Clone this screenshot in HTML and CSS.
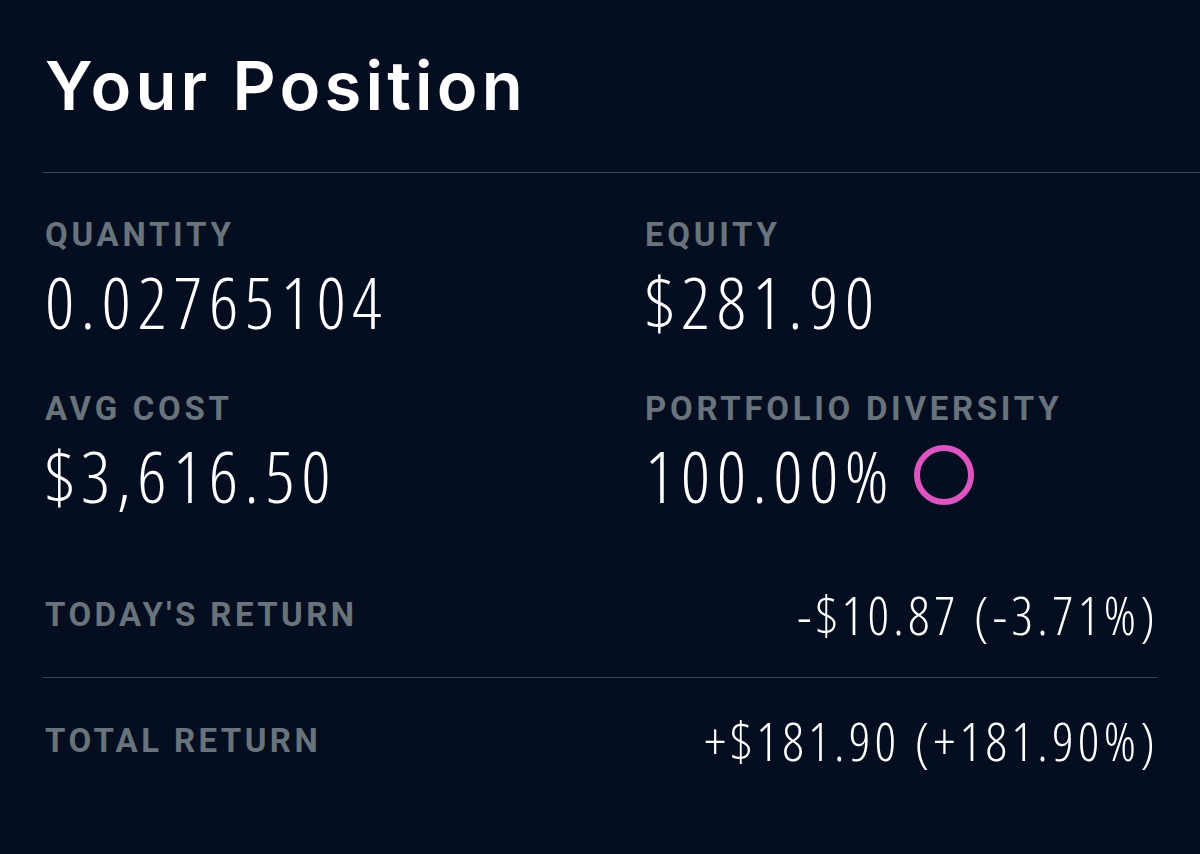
FILE: index.html
```html
<!DOCTYPE html>
<html lang="en">
<head>
<meta charset="utf-8">
<title>Your Position</title>
<link rel="stylesheet" href="styles.css">
</head>
<body>
<main class="position">
  <h1 class="title">Your Position</h1>
  <div class="rule rule-full"></div>
  <section class="stats">
    <div class="stat">
      <div class="label">QUANTITY</div>
      <div class="value">0.02765104</div>
    </div>
    <div class="stat">
      <div class="label">EQUITY</div>
      <div class="value">$281.90</div>
    </div>
    <div class="stat">
      <div class="label">AVG COST</div>
      <div class="value">$3,616.50</div>
    </div>
    <div class="stat">
      <div class="label">PORTFOLIO DIVERSITY</div>
      <div class="value value-ring">100.00%
        <svg class="ring" width="60" height="60" viewBox="0 0 60 60" aria-hidden="true"><circle cx="30" cy="30" r="27" fill="none" stroke="#de55c1" stroke-width="6"/></svg>
      </div>
    </div>
  </section>
  <div class="row row-today">
    <div class="label label-row">TODAY'S RETURN</div>
    <div class="row-value">-$10.87 (-3.71%)</div>
  </div>
  <div class="rule rule-inner"></div>
  <div class="row row-total">
    <div class="label label-row">TOTAL RETURN</div>
    <div class="row-value">+$181.90 (+181.90%)</div>
  </div>
</main>
</body>
</html>
```
FILE: styles.css
```css
html, body {
  margin: 0;
  padding: 0;
  background: #050d20;
  height: 100%;
}
body {
  color: #ffffff;
  font-family: "Open Sans", "Liberation Sans", sans-serif;
  overflow: hidden;
}
.position {
  padding: 46px 0 0 45px;
}
.title {
  margin: 0;
  font-family: "Inter", "DejaVu Sans", sans-serif;
  font-weight: 600;
  font-size: 67px;
  line-height: 80px;
  letter-spacing: 4.2px;
  color: #ffffff;
}
.rule {
  height: 1px;
  background: #3b4657;
}
.rule-full {
  margin: 46px 0 0 -2px;
}
.rule-inner {
  margin: 12px 43px 0 -2px;
}
.stats {
  display: grid;
  grid-template-columns: 600px 1fr;
  row-gap: 50px;
  padding-top: 44px;
}
.label {
  font-family: "Roboto", "Liberation Sans", sans-serif;
  font-weight: 700;
  font-size: 33px;
  line-height: 36px;
  letter-spacing: 3.7px;
  color: #69737b;
}
.value {
  font-family: "Open Sans", "Liberation Sans", sans-serif;
  font-weight: 300;
  font-stretch: 75%;
  font-size: 72px;
  line-height: 80px;
  letter-spacing: 6.5px;
  margin-top: 8px;
  color: #ffffff;
}
.value-ring {
  display: flex;
  align-items: center;
  gap: 19px;
}
.ring {
  display: block;
  flex: none;
}
.row {
  display: flex;
  justify-content: space-between;
  align-items: center;
  padding-right: 41px;
}
.row-today {
  height: 100px;
  margin-top: 50px;
}
.row-total {
  height: 126px;
}
.label-row {
  letter-spacing: 3.4px;
}
.row-value {
  font-family: "Open Sans", "Liberation Sans", sans-serif;
  font-weight: 300;
  font-stretch: 75%;
  font-size: 53px;
  line-height: 60px;
  letter-spacing: 4.3px;
  color: #ffffff;
}
```
